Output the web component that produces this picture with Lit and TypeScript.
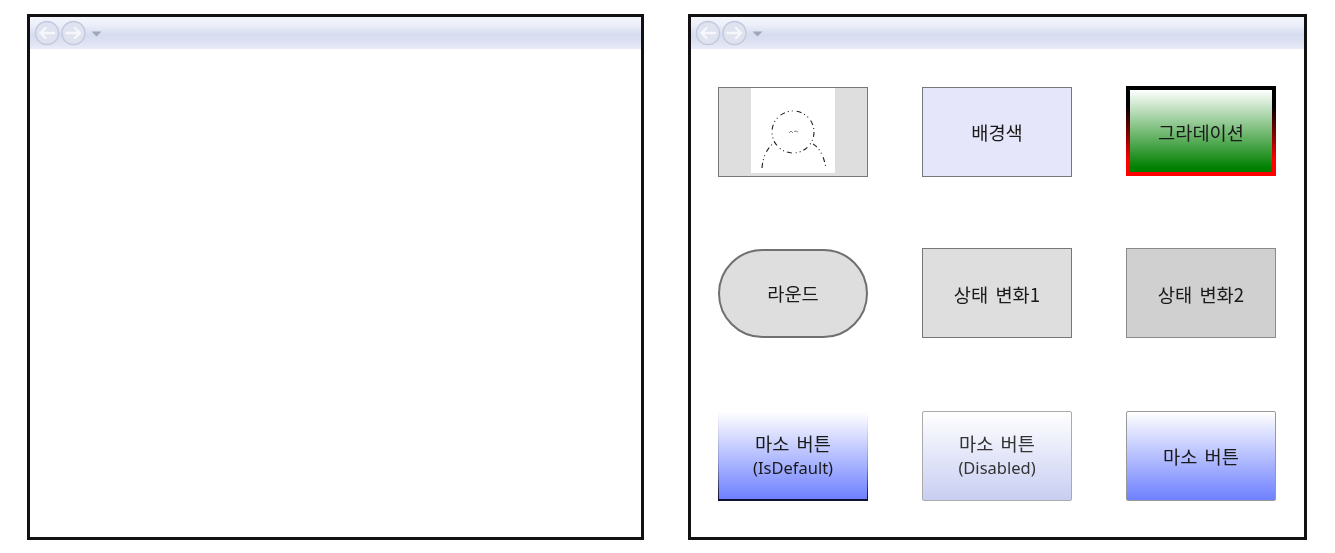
import { LitElement, html, css, svg } from "lit";
import { customElement } from "lit/decorators.js";

@customElement("win-bar")
class WinBar extends LitElement {
  static styles = css`
    :host { display: flex; align-items: center; height: 32px; padding-left: 3px; box-sizing: border-box; flex: none;
      background: linear-gradient(180deg, #f4f5fc 0%, #eceff9 25%, #d6ddf0 55%, #dbe1f2 75%, #e9ebf8 100%); }
    svg { display: block; }
  `;
  render() {
    const btn = (d: string) => svg`
      <circle cx="0" cy="0" r="11.5" fill="#dfe3f0" stroke="#c3c8dc" stroke-width="1.4"/>
      <path d="${d}" fill="none" stroke="#f6f7fb" stroke-width="2.4" stroke-linecap="round" stroke-linejoin="round"/>`;
    return html`<svg width="74" height="28" viewBox="0 0 74 28">
      <g transform="translate(14 14)">${btn("M7 0H-6M-1.5-5L-6.5 0L-1.5 5")}</g>
      <g transform="translate(40.5 14)">${btn("M-7 0H6M1.5-5L6.5 0L1.5 5")}</g>
      <path d="M58.500 12.500H68.500L63.500 17.500Z" fill="#a0a5ba"/>
    </svg>`;
  }
}

@customElement("person-pic")
class PersonPic extends LitElement {
  static styles = css`
    :host { display: flex; justify-content: center; height: 100%; background: #dedede; }
    svg { display: block; background: #fff; }
  `;
  render() {
    return html`<svg width="84" height="85" viewBox="0 0 84 85">
      <g fill="none" stroke="#222" stroke-width="1.1" stroke-dasharray="5 3 1 3 1 4">
        <circle cx="42" cy="44" r="21"/>
        <path d="M11 80C12 68 16 60 24 54"/>
        <path d="M62 56C69 60 73 69 75 80"/>
      </g>
      <path d="M38 45L40 43L42 45M43 43.500L45 43L47 44" fill="none" stroke="#666" stroke-width=".8"/>
    </svg>`;
  }
}

@customElement("app-root")
class AppRoot extends LitElement {
  static styles = css`
    :host { display: flex; gap: 44px; padding: 14px 0 0 27px; box-sizing: border-box; width: 1335px; height: 553px;
      background: #fff; overflow: hidden; font-family: "Noto Sans CJK KR", "Noto Sans", sans-serif; font-size: 18.700px; color: #1a1a1a;
      word-spacing: 3px; filter: blur(0.45px); }
    .window { display: flex; flex-direction: column; width: 617px; height: 526px; box-sizing: border-box;
      border: 3px solid #111; background: #fff; }
    .window.right { width: 619px; }
    .grid { display: grid; grid-template-columns: repeat(3, 150px); grid-template-rows: 161px 163px 90px; column-gap: 54px;
      padding: 38px 0 0 27px; align-items: start; }
    .b { height: 90px; box-sizing: border-box; display: flex; flex-direction: column; align-items: center; justify-content: center;
      border: 1px solid #777; background: #dedede; text-align: center; line-height: 25px; }
    .lat { font-family: "Noto Sans", sans-serif; font-size: 16.500px; }
    .pic { display: block; padding: 0; }
    .color { background: #e6e6fa; padding-bottom: 1px; }
    .grad { margin-top: -1px; border: 4px solid; border-image: linear-gradient(180deg, #000 0%, #000 20%, #ff0000 85%) 1;
      background: linear-gradient(180deg, #fff 0%, #008000 95%); }
    .round { margin-top: 1px; height: 89px; padding-bottom: 2px; border: 2px solid #707070; border-radius: 45px; }
    .s2 { background: #d0d0d0; border-color: #8a8a8a; }
    .mouse { padding-bottom: 2px; border-radius: 2px; border: 1px solid #999; background: linear-gradient(180deg, #fff 0%, #6e80ff 100%); }
    .def { border-width: 1px 1px 2px; border-image: linear-gradient(180deg, #fff 0%, #8890d0 60%, #101030 98%) 1; }
    .dis { background: linear-gradient(180deg, #fff 0%, #c8cef2 100%); border-color: #aaa; color: #333; }
  `;
  render() {
    return html`
      <div class="window"><win-bar></win-bar></div>
      <div class="window right">
        <win-bar></win-bar>
        <div class="grid">
          <div class="b pic"><person-pic></person-pic></div>
          <div class="b color">배경색</div>
          <div class="b grad">그라데이션</div>
          <div class="b round">라운드</div>
          <div class="b">상태 변화1</div>
          <div class="b s2">상태 변화2</div>
          <div class="b mouse def"><span>마소 버튼</span><span class="lat">(IsDefault)</span></div>
          <div class="b mouse dis"><span>마소 버튼</span><span class="lat">(Disabled)</span></div>
          <div class="b mouse">마소 버튼</div>
        </div>
      </div>`;
  }
}
